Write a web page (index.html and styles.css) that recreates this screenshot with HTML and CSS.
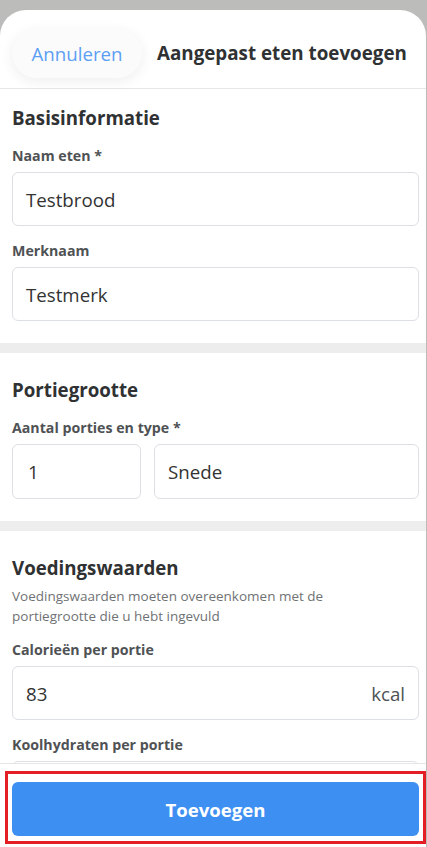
FILE: index.html
```html
<!DOCTYPE html>
<html lang="nl">
<head>
  <meta charset="UTF-8" />
  <meta name="viewport" content="width=device-width, initial-scale=1.0"/>
  <title>Aangepast eten toevoegen</title>
  <link rel="stylesheet" href="styles.css">
</head>
<body>
  <div class="sheet">
    <!-- header -->
    <header class="top-bar">
      <button class="cancel-btn">Annuleren</button>
      <h1 class="title">Aangepast eten toevoegen</h1>
    </header>

    <div class="content">
      <!-- basisinformatie -->
      <section class="section first">
        <h2>Basisinformatie</h2>
        <label class="field-label">Naam eten *</label>
        <div class="field">Testbrood</div>
        <label class="field-label">Merknaam</label>
        <div class="field">Testmerk</div>
      </section>

      <div class="divider"></div>

      <!-- portiegrootte -->
      <section class="section">
        <h2>Portiegrootte</h2>
        <label class="field-label">Aantal porties en type *</label>
        <div class="field-row">
          <div class="field small">1</div>
          <div class="field grow">Snede</div>
        </div>
      </section>

      <div class="divider"></div>

      <!-- voedingswaarden -->
      <section class="section">
        <h2>Voedingswaarden</h2>
        <p class="desc">Voedingswaarden moeten overeenkomen met de<br>portiegrootte die u hebt ingevuld</p>
        <label class="field-label">Calorieën per portie</label>
        <div class="field unit-field"><span>83</span><span class="unit">kcal</span></div>
        <label class="field-label">Koolhydraten per portie</label>
        <div class="field"></div>
      </section>
    </div>

    <!-- footer -->
    <footer class="footer">
      <button class="add-btn">Toevoegen</button>
      <div class="highlight"></div>
    </footer>
  </div>
</body>
</html>
```

FILE: styles.css
```css
* {
  box-sizing: border-box;
}

html, body {
  height: 100%;
}

body {
  margin: 0;
  background-color: #bcbdba;
  font-family: "Open Sans", Lato, sans-serif;
  color: #333;
  overflow: hidden;
}

.sheet {
  margin-top: 10px;
  margin-right: 1px;
  height: 837px;
  background-color: #ffffff;
  border-radius: 26px 26px 0 0;
  display: flex;
  flex-direction: column;
  overflow: hidden;
}

.top-bar {
  height: 79px;
  flex-shrink: 0;
  display: flex;
  align-items: center;
  padding: 8px 0 0 12px;
  border-bottom: 1px solid #e7e7e7;
}

.cancel-btn {
  width: 130px;
  height: 49px;
  border: none;
  border-radius: 25px;
  background-color: #fbfbfb;
  box-shadow: 0 3px 14px rgba(0,0,0,0.07);
  color: #5b9ff4;
  font-family: inherit;
  font-size: 18.7px;
  margin-right: 15px;
}

.title {
  margin: 0;
  font-size: 18.8px;
  font-weight: bold;
  color: #2f3133;
  white-space: nowrap;
}

.content {
  flex: 1;
  overflow: hidden;
}

.section {
  padding: 25px 7px 22px 12px;
}

.section.first {
  padding-top: 17px;
}

.section h2 {
  margin: 0 0 16px;
  font-size: 18.7px;
  line-height: 24px;
  font-weight: bold;
  color: #2f3133;
}

.field-label {
  display: block;
  font-size: 14.2px;
  line-height: 20px;
  font-weight: bold;
  color: #4f5254;
  margin-bottom: 6px;
}

.field {
  height: 54px;
  border: 1.5px solid #dcdfe4;
  border-radius: 6px;
  padding: 0 13px;
  display: flex;
  align-items: center;
  font-size: 18.7px;
  color: #333;
  margin-bottom: 15px;
}

.section .field:last-child {
  margin-bottom: 0;
}

.field-row {
  display: flex;
  gap: 13px;
}

.field-row .field {
  height: 55px;
  margin-bottom: 0;
}

.field.small {
  width: 129px;
  padding-left: 15px;
}

.field.grow {
  flex: 1;
}

.unit-field {
  justify-content: space-between;
}

.unit {
  color: #4f5254;
}

.desc {
  margin: -10px 0 14px;
  font-size: 13.5px;
  line-height: 20px;
  color: #6f7274;
}

.divider {
  height: 10px;
  background-color: #ededed;
}

.footer {
  position: relative;
  height: 84px;
  flex-shrink: 0;
  border-top: 1px solid #e6e6e6;
  background-color: #ffffff;
  padding: 18px 7px 0 12px;
}

.add-btn {
  width: 100%;
  height: 54px;
  border: none;
  border-radius: 6px;
  background-color: #3e8ff2;
  color: #ffffff;
  font-family: inherit;
  font-size: 18.6px;
  font-weight: bold;
}

.highlight {
  position: absolute;
  left: 5px;
  top: 7px;
  width: 421px;
  height: 73px;
  border: 3.5px solid #e31e24;
  pointer-events: none;
}
```
